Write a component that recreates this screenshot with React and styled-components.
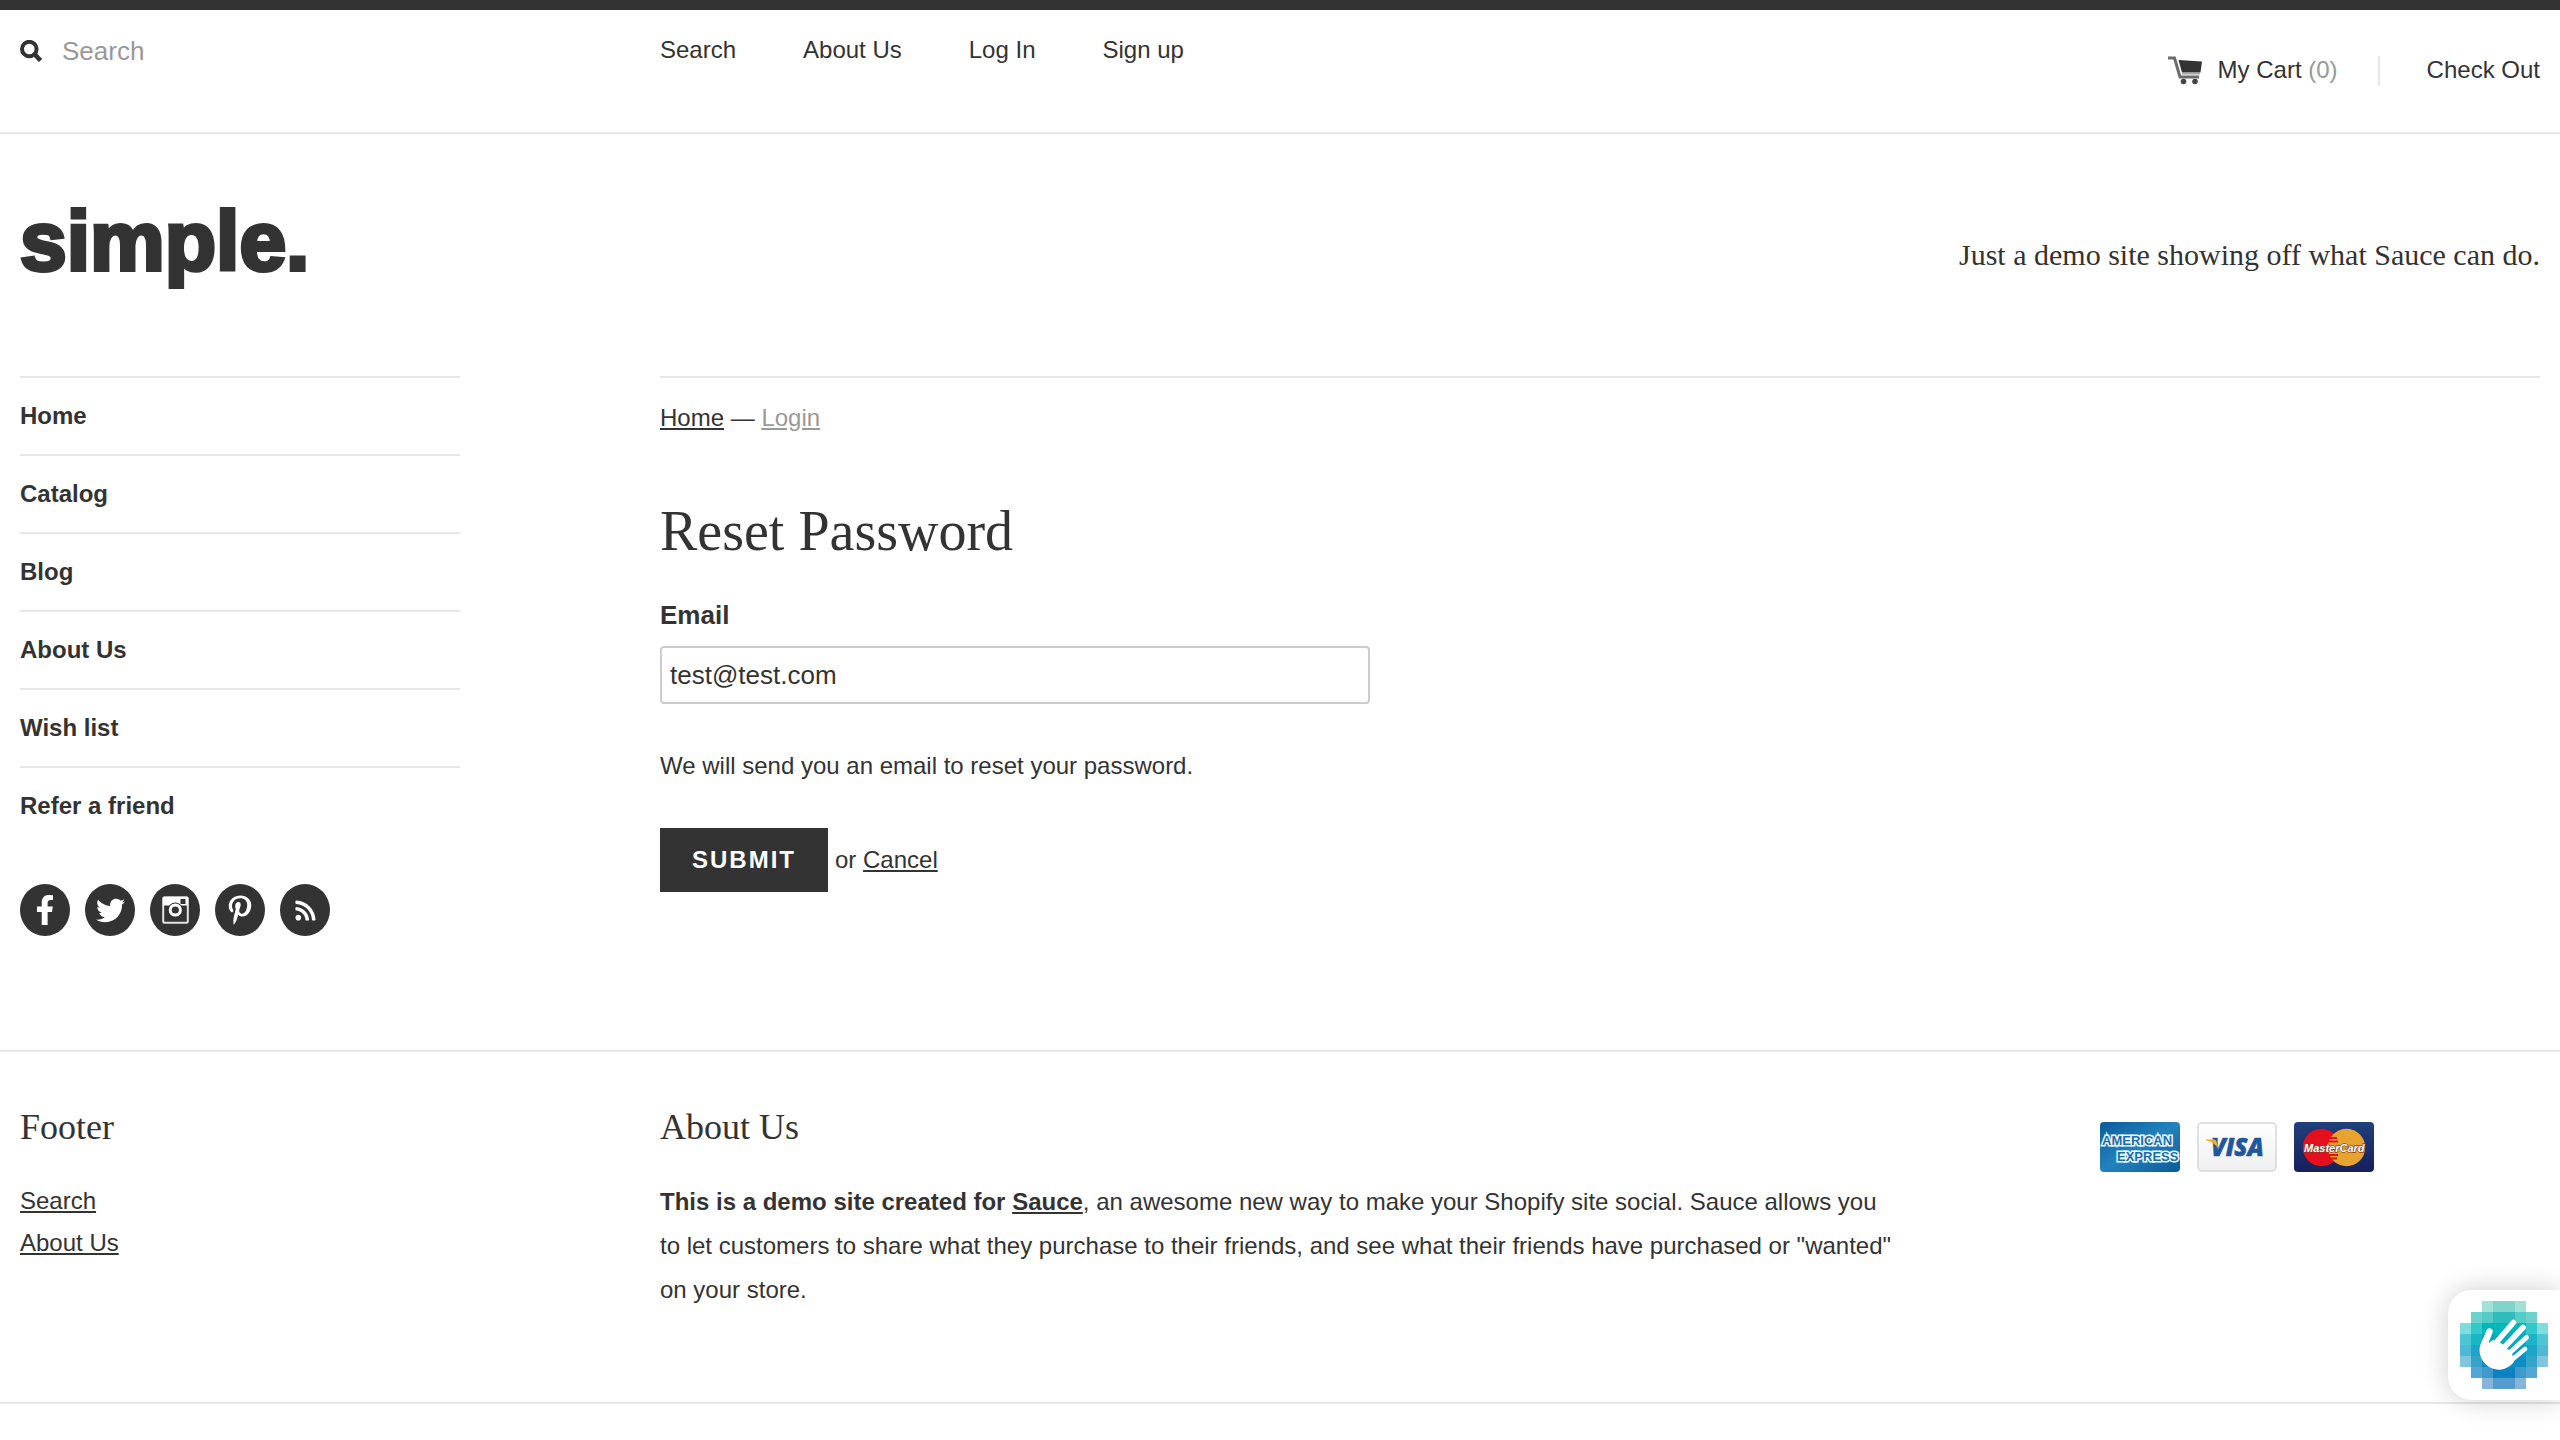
import React, { useState } from "react";
import styled, { createGlobalStyle } from "styled-components";
import { FaFacebookF, FaTwitter, FaPinterestP, FaRss } from "react-icons/fa";

const ink = "#333333";
const muted = "#999999";
const rule = "#e7e7e7";
const sans = `"Liberation Sans", Arial, Helvetica, sans-serif`;
const serif = `"Liberation Serif", "Times New Roman", Times, serif`;

const GlobalStyle = createGlobalStyle`
  *, *::before, *::after { box-sizing: border-box; }
  body {
    margin: 0;
    background: #ffffff;
    color: ${ink};
    font: 24px/28px ${sans};
  }
  h1, h2, p, ul { margin: 0; padding: 0; font-weight: normal; }
  ul { list-style: none; }
`;

const Page = styled.div`
  border-top: 10px solid ${ink};
  padding-bottom: 36px;
`;

const Columns = styled.div`
  display: grid;
  grid-template-columns: repeat(4, minmax(0, 1fr));
  column-gap: 40px;
  padding: 0 20px;
`;

const Toolbar = styled(Columns).attrs({ as: "header" })`
  border-bottom: 2px solid ${rule};
  min-height: 124px;
  align-items: start;
`;

const SearchForm = styled.form`
  display: flex;
  align-items: center;
  gap: 18px;
  padding-top: 26px;
`;

const SearchButton = styled.button`
  display: flex;
  padding: 0;
  border: 0;
  background: none;
  color: ${ink};
`;

const SearchInput = styled.input`
  flex: 1;
  min-width: 0;
  height: 30px;
  padding: 0;
  border: 0;
  outline: 0;
  background: none;
  color: ${ink};
  font: 26px/30px ${sans};
  &::placeholder { color: ${muted}; opacity: 1; }
`;

const TopNav = styled.nav`
  grid-column: span 2;
  display: flex;
  gap: 67px;
  padding-top: 26px;
`;

const PlainLink = styled.a`
  color: ${ink};
  text-decoration: none;
`;

const TextLink = styled.a`
  color: ${(p) => (p.$muted ? muted : "inherit")};
  text-decoration: underline;
`;

const CartBar = styled.div`
  display: flex;
  justify-content: flex-end;
  padding-top: 46px;
`;

const CartLink = styled(PlainLink)`
  display: flex;
  gap: 15px;
  height: 30px;
  padding-right: 40px;
  border-right: 2px solid ${rule};
  margin-right: 47px;
`;

const CartCount = styled.span`
  color: ${muted};
`;

const Masthead = styled.div`
  display: flex;
  align-items: center;
  justify-content: space-between;
  min-height: 242px;
  padding: 0 20px;
`;

const Logo = styled.a`
  padding-bottom: 28px;
  color: ${ink};
  font: bold 84px/96px ${sans};
  -webkit-text-stroke: 4px ${ink};
  text-decoration: none;
`;

const Tagline = styled.p`
  font: 30px/34px ${serif};
`;

const Sidebar = styled.aside`
  max-width: 440px;
`;

const SideItem = styled.li`
  border-top: 2px solid ${rule};
`;

const SideLink = styled(PlainLink)`
  display: block;
  padding: 24px 0;
  font-weight: bold;
`;

const SocialList = styled.ul`
  display: flex;
  gap: 15px;
  margin-top: 40px;
`;

const SocialLink = styled.a`
  display: flex;
  align-items: center;
  justify-content: center;
  width: 50px;
  height: 52px;
  border-radius: 50%;
  background: ${ink};
  color: #ffffff;
`;

const Main = styled.main`
  grid-column: span 3;
  border-top: 2px solid ${rule};
  padding-top: 26px;
`;

const Title = styled.h1`
  margin-top: 68px;
  font: 56px/62px ${serif};
`;

const ResetForm = styled.form`
  max-width: 710px;
  margin-top: 38px;
`;

const Label = styled.label`
  display: block;
  font: bold 26px/30px ${sans};
`;

const EmailInput = styled.input`
  display: block;
  width: 100%;
  height: 58px;
  margin-top: 16px;
  padding: 0 8px;
  border: 2px solid #cccccc;
  border-radius: 4px;
  outline: 0;
  background: #ffffff;
  color: ${ink};
  font: 26px/30px ${sans};
`;

const Hint = styled.p`
  margin-top: 48px;
`;

const Actions = styled.div`
  display: flex;
  align-items: center;
  gap: 7px;
  margin-top: 48px;
`;

const SubmitButton = styled.button`
  height: 64px;
  padding: 0 32px;
  border: 0;
  background: ${ink};
  color: #ffffff;
  font: bold 24px/28px ${sans};
  letter-spacing: 2px;
  text-transform: uppercase;
`;

const Footer = styled(Columns).attrs({ as: "footer" })`
  margin-top: 114px;
  padding-top: 55px;
  padding-bottom: 90px;
  border-top: 2px solid ${rule};
  border-bottom: 2px solid ${rule};
`;

const FooterTitle = styled.h2`
  margin-bottom: 33px;
  font: 36px/40px ${serif};
`;

const FooterLinks = styled.ul`
  line-height: 42px;
`;

const About = styled.section`
  grid-column: span 2;
`;

const AboutText = styled.p`
  line-height: 44px;
`;

const Payments = styled.ul`
  display: flex;
  justify-content: center;
  gap: 17px;
  padding: 15px 6px 0 0;
`;

const CardArt = styled.svg`
  display: block;
  width: 80px;
  height: 50px;
`;

const Widget = styled.button`
  position: fixed;
  right: 0;
  bottom: 40px;
  display: flex;
  padding: 11px 12px;
  border: 0;
  border-radius: 24px 0 0 24px;
  background: #ffffff;
  box-shadow: 0 0 28px rgba(0, 0, 0, 0.2);
`;

function SearchIcon() {
  return (
    <svg width="24" height="22" viewBox="0 0 24 22" fill="none" stroke="currentColor" aria-hidden="true">
      <ellipse cx="9.3" cy="9" rx="7.3" ry="7.2" strokeWidth="4" />
      <path d="M14 13.5 L20.5 20.5" strokeWidth="4.6" />
    </svg>
  );
}

function CartIcon() {
  return (
    <svg width="35" height="29" viewBox="0 0 35 29" aria-hidden="true">
      <path d="M0 2 H6.5 L12 21 H31" fill="none" stroke="#6b6b6b" strokeWidth="3" />
      <path d="M10.5 4 L34 5.5 L32.5 16.5 L14 16.5 Z" fill={ink} />
      <path d="M14 17.8 H32" stroke="#a8a8a8" strokeWidth="1.5" />
      <circle cx="15.5" cy="25.5" r="2.8" fill="#444444" />
      <circle cx="27" cy="25.5" r="2.8" fill="#444444" />
    </svg>
  );
}

function InstagramIcon() {
  return (
    <svg width="27" height="28" viewBox="0 0 27 28" aria-hidden="true">
      <rect x="1.2" y="1.2" width="24.6" height="25.6" rx="1.5" fill="none" stroke="#e4e4e4" strokeWidth="2" />
      <path d="M1 1 H26 V9.5 H1 Z" fill="#ffffff" />
      <rect x="18.5" y="3" width="5" height="5" fill={ink} />
      <circle cx="13.3" cy="14" r="7.6" fill={ink} />
      <circle cx="13.3" cy="14" r="5.1" fill="none" stroke="#ffffff" strokeWidth="3" />
    </svg>
  );
}

function AmexCard() {
  return (
    <CardArt viewBox="0 0 80 50" role="img" aria-label="American Express">
      <defs>
        <linearGradient id="amex" x1="0" y1="0" x2="1" y2="1">
          <stop offset="0" stopColor="#0b5c99" />
          <stop offset="0.5" stopColor="#2382be" />
          <stop offset="1" stopColor="#0a5a98" />
        </linearGradient>
        <clipPath id="amexClip"><rect width="80" height="50" rx="4" /></clipPath>
      </defs>
      <g
        clipPath="url(#amexClip)"
        fontFamily="Liberation Sans, Arial, sans-serif"
        fontSize="13"
        fontWeight="bold"
        fill="#1a6dab"
        stroke="#eef7fc"
        strokeWidth="3"
        paintOrder="stroke"
      >
        <rect width="80" height="50" fill="url(#amex)" stroke="none" />
        <text x="2" y="23">AMERICAN</text>
        <text x="17" y="39">EXPRESS</text>
      </g>
    </CardArt>
  );
}

function VisaCard() {
  return (
    <CardArt viewBox="0 0 80 50" role="img" aria-label="Visa">
      <defs>
        <linearGradient id="visa" x1="0" y1="0" x2="0" y2="1">
          <stop offset="0" stopColor="#ffffff" />
          <stop offset="1" stopColor="#f0f0f2" />
        </linearGradient>
      </defs>
      <rect x="1" y="1" width="78" height="48" rx="4" fill="url(#visa)" stroke="#d8d8dc" strokeWidth="1.5" />
      <text x="14" y="34" fill="#1f569c" stroke="#1f569c" strokeWidth="0.6" fontFamily="Open Sans, sans-serif" fontSize="24" fontWeight="800" fontStyle="italic">VISA</text>
      <path d="M9 17.5 H17.5 Q19.5 18 20 20.5 L21.5 27 Q17 19.5 9 18.5 Z" fill="#f0ad2a" />
    </CardArt>
  );
}

function MasterCard() {
  return (
    <CardArt viewBox="0 0 80 50" role="img" aria-label="MasterCard">
      <defs>
        <linearGradient id="mc" x1="0" y1="0" x2="0" y2="1">
          <stop offset="0" stopColor="#20407c" />
          <stop offset="1" stopColor="#16205c" />
        </linearGradient>
      </defs>
      <rect width="80" height="50" rx="4" fill="url(#mc)" />
      <circle cx="27.5" cy="25.5" r="18.7" fill="#e60f1e" />
      <circle cx="52.5" cy="25.5" r="18.7" fill="#e6a42e" />
      <path d="M35 16 H43 M34 19.5 H44 M34 33 H44 M36 36.5 H43" stroke="#e60f1e" strokeWidth="1.8" />
      <text
        x="10"
        y="30"
        fill="#ffffff"
        stroke="#8a3a2c"
        strokeWidth="1.4"
        paintOrder="stroke"
        fontFamily="Liberation Sans, Arial, sans-serif"
        fontSize="11"
        fontWeight="bold"
        fontStyle="italic"
      >
        MasterCard
      </text>
    </CardArt>
  );
}

/* Each row lists the left half of the mosaic; the right half mirrors it. */
const mosaic = [
  [null, null, "#a3e0d8", "#80d4ca"],
  [null, "#6fd1cd", "#56cac4", "#2fbcba"],
  ["#80dbdd", "#33c8c9", "#00b7bd", "#00b7bd"],
  ["#4dc5d3", "#1bb5c6", "#00acc0", "#00acc0"],
  ["#4db9d5", "#1ba6c9", "#00a0c4", "#00a0c4"],
  ["#80c4de", "#36a3cb", "#0c8ec2", "#0c8ec2"],
  [null, "#55a6d3", "#3d9acb", "#0c82c0"],
  [null, null, "#86b4db", "#569bd0"],
];

function HandIcon() {
  return (
    <svg width="88" height="88" viewBox="0 0 88 88" aria-hidden="true">
      <g shapeRendering="crispEdges">
        {mosaic.map((half, r) =>
          [...half, ...[...half].reverse()].map(
            (fill, c) => fill && <rect key={`${r}-${c}`} x={c * 11} y={r * 11} width="11" height="11" fill={fill} />
          )
        )}
      </g>
      <g stroke="#ffffff" strokeLinecap="round" fill="none">
        <path d="M53.5 21.5 L34 44" strokeWidth="5.6" />
        <path d="M63 26.5 L40 51" strokeWidth="5.6" />
        <path d="M66.5 36.5 L44 57" strokeWidth="5" />
        <path d="M65 48 L48 62" strokeWidth="4.6" />
        <path d="M29.5 30.5 L25 42" strokeWidth="6.4" />
      </g>
      <path d="M26.6 29.5 C24 38 19.5 42 19.5 49.5 C20 61 29.5 68.7 39 68.7 C46 68.7 50 65 54 61 L52 52 L41 42 L33 39 L29 42 Z" fill="#ffffff" />
    </svg>
  );
}

const topLinks = ["Search", "About Us", "Log In", "Sign up"];
const sideLinks = ["Home", "Catalog", "Blog", "About Us", "Wish list", "Refer a friend"];
const socials = [
  { name: "Facebook", icon: <FaFacebookF size={30} /> },
  { name: "Twitter", icon: <FaTwitter size={29} /> },
  { name: "Instagram", icon: <InstagramIcon /> },
  { name: "Pinterest", icon: <FaPinterestP size={30} /> },
  { name: "RSS", icon: <FaRss size={23} /> },
];

export default function App() {
  const [email, setEmail] = useState("test@test.com");
  return (
    <>
      <GlobalStyle />
      <Page>
        <Toolbar>
          <SearchForm role="search" onSubmit={(e) => e.preventDefault()}>
            <SearchButton aria-label="Submit search"><SearchIcon /></SearchButton>
            <SearchInput type="text" placeholder="Search" aria-label="Search" />
          </SearchForm>
          <TopNav>
            {topLinks.map((t) => <PlainLink key={t} href="#">{t}</PlainLink>)}
          </TopNav>
          <CartBar>
            <CartLink href="#">
              <CartIcon />
              <span>My Cart <CartCount>(0)</CartCount></span>
            </CartLink>
            <PlainLink href="#">Check Out</PlainLink>
          </CartBar>
        </Toolbar>

        <Masthead>
          <Logo href="#">simple.</Logo>
          <Tagline>Just a demo site showing off what Sauce can do.</Tagline>
        </Masthead>

        <Columns>
          <Sidebar>
            <nav>
              <ul>
                {sideLinks.map((t) => (
                  <SideItem key={t}><SideLink href="#">{t}</SideLink></SideItem>
                ))}
              </ul>
            </nav>
            <SocialList>
              {socials.map((s) => (
                <li key={s.name}><SocialLink href="#" aria-label={s.name}>{s.icon}</SocialLink></li>
              ))}
            </SocialList>
          </Sidebar>
          <Main>
            <nav>
              <TextLink href="#">Home</TextLink> — <TextLink href="#" $muted>Login</TextLink>
            </nav>
            <Title>Reset Password</Title>
            <ResetForm onSubmit={(e) => e.preventDefault()}>
              <Label htmlFor="email">Email</Label>
              <EmailInput id="email" type="email" value={email} onChange={(e) => setEmail(e.target.value)} />
              <Hint>We will send you an email to reset your password.</Hint>
              <Actions>
                <SubmitButton type="submit">Submit</SubmitButton>
                <span>or <TextLink href="#">Cancel</TextLink></span>
              </Actions>
            </ResetForm>
          </Main>
        </Columns>

        <Footer>
          <section>
            <FooterTitle>Footer</FooterTitle>
            <FooterLinks>
              <li><TextLink href="#">Search</TextLink></li>
              <li><TextLink href="#">About Us</TextLink></li>
            </FooterLinks>
          </section>
          <About>
            <FooterTitle>About Us</FooterTitle>
            <AboutText>
              <strong>This is a demo site created for <TextLink href="#">Sauce</TextLink></strong>, an awesome new
              way to make your Shopify site social. Sauce allows you to let customers to share what they purchase
              to their friends, and see what their friends have purchased or "wanted" on your store.
            </AboutText>
          </About>
          <Payments>
            <li><AmexCard /></li>
            <li><VisaCard /></li>
            <li><MasterCard /></li>
          </Payments>
        </Footer>
      </Page>
      <Widget aria-label="Accessibility"><HandIcon /></Widget>
    </>
  );
}
